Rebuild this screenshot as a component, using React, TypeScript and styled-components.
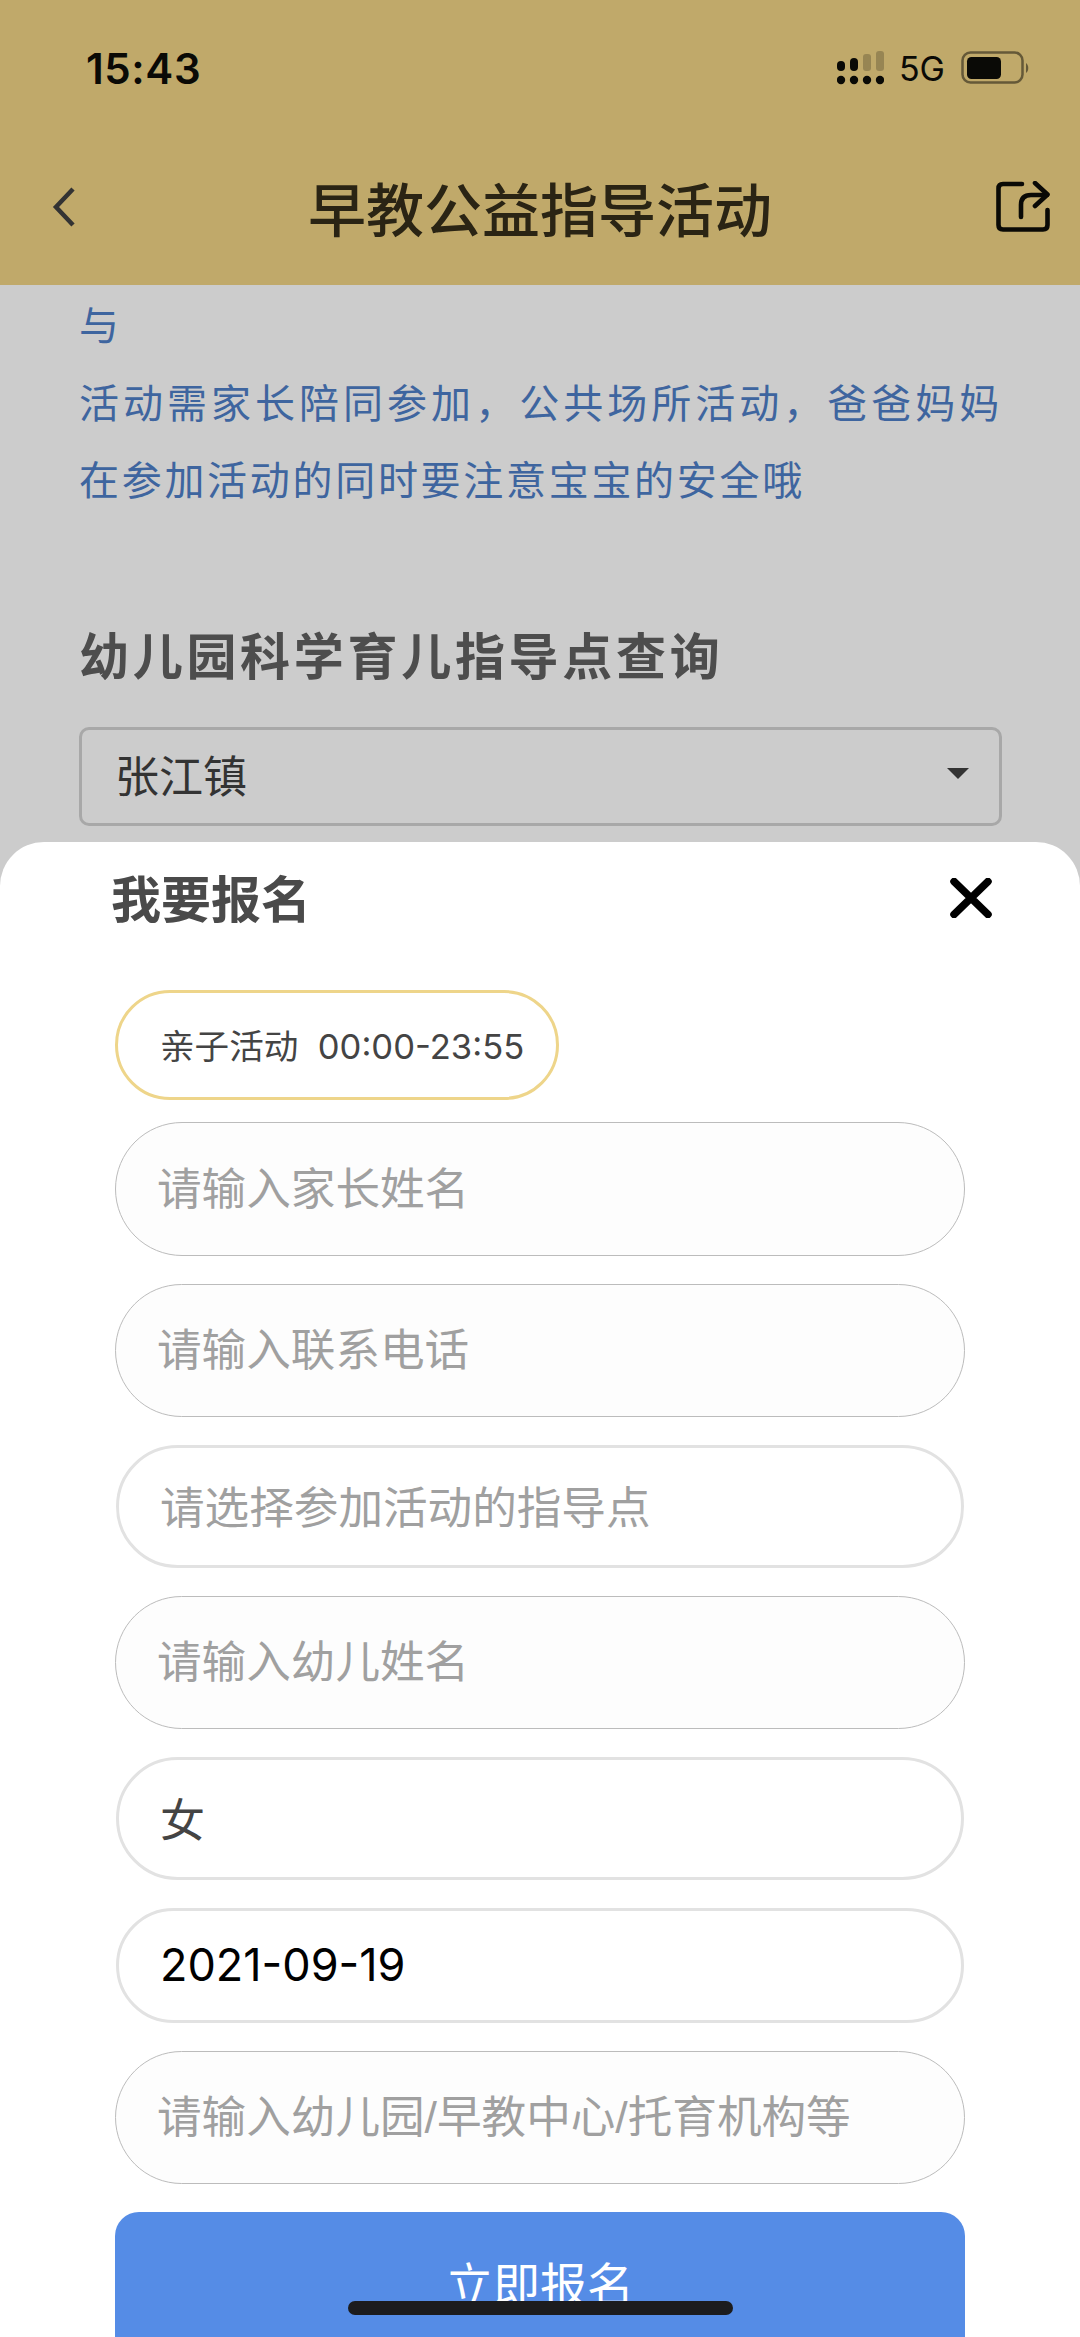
import React from "react";
import styled, { createGlobalStyle } from "styled-components";

const CJK = `"Noto Sans CJK SC", "Noto Sans", sans-serif`;
const LATIN = `Inter, "Liberation Sans", "Noto Sans CJK SC", sans-serif`;
const HINT = `"Liberation Sans", "Noto Sans CJK SC", sans-serif`;

const Global = createGlobalStyle`
  html, body { margin: 0; padding: 0; background: #ccc; }
  * { box-sizing: border-box; }
`;

const Page = styled.div`
  position: relative;
  width: 1080px;
  height: 2337px;
  overflow: hidden;
  display: flex;
  flex-direction: column;
  background: #cccccc;
  font-family: ${CJK};
`;

const Header = styled.header`
  height: 285px;
  flex: none;
  background: #c0a96a;
  display: flex;
  flex-direction: column;
`;

const StatusBar = styled.div`
  height: 136px;
  padding: 0 50px 0 86px;
  display: flex;
  align-items: center;
  justify-content: space-between;
`;

const Time = styled.span`
  font-family: ${LATIN};
  font-size: 42px;
  letter-spacing: 0.6px;
  font-weight: 600;
  color: #0a0a06;
`;

const StatusIcons = styled.div`
  display: flex;
  align-items: center;
`;

const Network = styled.span`
  font-family: ${LATIN};
  font-size: 34px;
  color: #0a0a06;
  margin: 0 16px 0 15px;
`;

const NavBar = styled.div`
  height: 149px;
  padding: 0 30px 8px;
  display: grid;
  grid-template-columns: 1fr auto 1fr;
  align-items: center;
`;

const BackSlot = styled.div`
  padding-left: 22px;
  display: flex;
`;

const Title = styled.h1`
  margin: 0;
  font-size: 58px;
  line-height: 1;
  font-weight: 500;
  color: #2a2414;
`;

const ShareSlot = styled.div`
  justify-self: end;
  display: flex;
`;

const Content = styled.main`
  padding: 0 78px 0 79px;
  display: flex;
  flex-direction: column;
`;

const Notice = styled.p`
  margin: 0;
  font-size: 40px;
  line-height: 77.5px;
  letter-spacing: 2.7px;
  text-align: justify;
  color: #3e659f;
`;

const SectionTitle = styled.h2`
  margin: 102px 0 0;
  font-size: 50px;
  line-height: 66px;
  letter-spacing: 3.7px;
  font-weight: 700;
  color: #4d4d4d;
`;

const Select = styled.div`
  margin-top: 41px;
  height: 99px;
  border: 3px solid #a8a8a8;
  border-radius: 10px;
  padding: 0 30px 5px 33px;
  display: flex;
  align-items: center;
  justify-content: space-between;
  font-size: 44px;
  color: #333;
`;

const Caret = styled.span`
  width: 0;
  height: 0;
  border-left: 11px solid transparent;
  border-right: 11px solid transparent;
  border-top: 11px solid #333;
`;

const Sheet = styled.section`
  position: absolute;
  left: 0;
  right: 0;
  top: 842px;
  bottom: 0;
  background: #fff;
  border-radius: 44px 44px 0 0;
  padding: 0 115px;
  display: flex;
  flex-direction: column;
`;

const SheetHead = styled.div`
  height: 148px;
  flex: none;
  padding: 0 0 36px 0;
  display: flex;
  align-items: center;
  justify-content: space-between;
`;

const SheetTitle = styled.h3`
  margin: -5px 0 0 -4px;
  font-size: 50px;
  font-weight: 700;
  line-height: 1;
  color: #4a4a4a;
`;

const CloseButton = styled.div`
  display: flex;
  margin-right: -27px;
`;

const Chip = styled.div`
  width: 444px;
  height: 110px;
  flex: none;
  margin-bottom: 22px;
  border: 3px solid #eed58a;
  border-radius: 55px;
  padding: 0 0 2px 42px;
  display: flex;
  align-items: center;
  white-space: pre;
  font-family: ${LATIN};
  font-size: 34.6px;
  color: #444;
`;

const Fields = styled.div`
  display: flex;
  flex-direction: column;
  gap: 28px;
`;

const Field = styled.div<{ $h: number; $plain?: boolean; $tone: "hint" | "value" | "strong" }>`
  height: ${(p) => p.$h}px;
  flex: none;
  border-radius: ${(p) => p.$h / 2}px;
  border: ${(p) => (p.$plain ? "3px solid #e2e2e2" : "1.5px solid #bcbcbc")};
  background: ${(p) => (p.$plain ? "#fff" : "#fdfdfd")};
  margin: ${(p) => (p.$plain ? "0 1px" : "0")};
  padding: 0 0 ${(p) => (p.$tone === "hint" ? (p.$plain ? 4 : 8) : 2)}px 41px;
  display: flex;
  align-items: center;
  font-family: ${(p) => (p.$tone === "hint" ? HINT : LATIN)};
  font-size: ${(p) => (p.$tone === "hint" ? 44.6 : 45)}px;
  color: ${(p) => (p.$tone === "hint" ? "#a0a0a0" : p.$tone === "value" ? "#444" : "#000")};
`;

const Submit = styled.div`
  height: 190px;
  flex: none;
  margin-top: 28px;
  border-radius: 24px;
  background: #558ce6;
  color: #fff;
  font-size: 47px;
  display: flex;
  justify-content: center;
  padding-top: 38px;
  line-height: 64px;
`;

const HomeIndicator = styled.div`
  position: absolute;
  left: 348px;
  top: 2301px;
  width: 385px;
  height: 14px;
  border-radius: 7px;
  background: #1c1c1e;
`;

const SignalIcon = () => (
  <svg width="47" height="34" viewBox="0 0 47 34">
    <g fill="#0a0a06">
      {[4, 17, 30, 43].map((x) => (
        <circle key={x} cx={x} cy="29" r="4.2" />
      ))}
      <rect x="0" y="10" width="8" height="10" rx="4" />
      <rect x="13" y="7" width="8" height="13" rx="4" />
    </g>
    <g fill="#0a0a06" opacity="0.22">
      <rect x="26" y="3" width="8" height="17" rx="3" />
      <rect x="39" y="0" width="8" height="20" rx="3" />
    </g>
  </svg>
);

const BatteryIcon = () => (
  <svg width="69" height="34" viewBox="0 0 69 34">
    <rect x="1.5" y="1.5" width="60" height="30" rx="8" fill="none" stroke="#0a0a06" strokeOpacity="0.5" strokeWidth="2.5" />
    <rect x="6" y="6" width="34" height="22" rx="4.5" fill="#0a0a06" />
    <path d="M65 12 C68 14 68 20 65 22 Z" fill="#0a0a06" fillOpacity="0.5" />
  </svg>
);

const BackIcon = () => (
  <svg width="24" height="40" viewBox="0 0 24 40">
    <path d="M21 2 L4 20 L21 38" fill="none" stroke="#333" strokeWidth="4.5" />
  </svg>
);

const ShareIcon = () => (
  <svg width="54" height="52" viewBox="0 0 54 52" fill="none" stroke="#0a0a06" strokeWidth="4.6" strokeLinecap="round" strokeLinejoin="round">
    <path d="M26 3 H7 Q2.5 3 2.5 7.5 V44 Q2.5 48.5 7 48.5 H47 Q51.5 48.5 51.5 44 V29" />
    <path d="M25 36 V24 Q25 14 35 14 H51" />
    <path d="M39 2 L51.5 13.5 L39 25" />
  </svg>
);

const CloseIcon = () => (
  <svg width="42" height="40" viewBox="0 0 42 40">
    <path d="M4 3.5 L38 36.5 M38 3.5 L4 36.5" stroke="#000" strokeWidth="7.5" strokeLinecap="round" />
  </svg>
);

export default function App() {
  return (
    <Page>
      <Global />
      <Header>
        <StatusBar>
          <Time>15:43</Time>
          <StatusIcons>
            <SignalIcon />
            <Network>5G</Network>
            <BatteryIcon />
          </StatusIcons>
        </StatusBar>
        <NavBar>
          <BackSlot>
            <BackIcon />
          </BackSlot>
          <Title>早教公益指导活动</Title>
          <ShareSlot>
            <ShareIcon />
          </ShareSlot>
        </NavBar>
      </Header>
      <Content>
        <Notice>与</Notice>
        <Notice>活动需家长陪同参加，公共场所活动，爸爸妈妈在参加活动的同时要注意宝宝的安全哦</Notice>
        <SectionTitle>幼儿园科学育儿指导点查询</SectionTitle>
        <Select>
          张江镇
          <Caret />
        </Select>
      </Content>
      <Sheet>
        <SheetHead>
          <SheetTitle>我要报名</SheetTitle>
          <CloseButton>
            <CloseIcon />
          </CloseButton>
        </SheetHead>
        <Chip>亲子活动  00:00-23:55</Chip>
        <Fields>
          <Field $h={134} $tone="hint">请输入家长姓名</Field>
          <Field $h={133} $tone="hint">请输入联系电话</Field>
          <Field $h={123} $plain $tone="hint">请选择参加活动的指导点</Field>
          <Field $h={133} $tone="hint">请输入幼儿姓名</Field>
          <Field $h={123} $plain $tone="value">女</Field>
          <Field $h={115} $plain $tone="strong">2021-09-19</Field>
          <Field $h={133} $tone="hint">请输入幼儿园/早教中心/托育机构等</Field>
        </Fields>
        <Submit>立即报名</Submit>
      </Sheet>
      <HomeIndicator />
    </Page>
  );
}
